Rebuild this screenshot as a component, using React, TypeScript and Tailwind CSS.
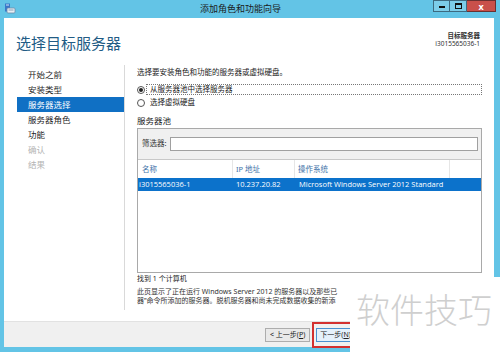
import React from "react";

const cjk = "font-['Noto_Sans','Noto_Sans_CJK_SC',sans-serif]";

const navItems = [
  { label: "开始之前", state: "normal" },
  { label: "安装类型", state: "normal" },
  { label: "服务器选择", state: "active" },
  { label: "服务器角色", state: "normal" },
  { label: "功能", state: "normal" },
  { label: "确认", state: "disabled" },
  { label: "结果", state: "disabled" },
];

function ServerIcon() {
  return (
    <svg width="12" height="11" viewBox="0 0 12 11">
      <rect x="1" y="0.5" width="5" height="8" fill="#3a78c8" />
      <rect x="2" y="1.5" width="3" height="1" fill="#cfe4f7" />
      <rect x="3" y="5" width="8" height="5" rx="1" fill="#e8eef4" stroke="#6b8aa8" strokeWidth="0.8" />
      <rect x="4.5" y="6.5" width="5" height="1" fill="#8aa0b6" />
    </svg>
  );
}

export default function App() {
  return (
    <div className={`w-[500px] h-[352px] bg-[#63c4e6] flex flex-col overflow-hidden relative ${cjk}`}>
      {/* ── TITLE BAR ── */}
      <div className="h-[18px] flex items-start shrink-0">
        <div className="w-[16px] h-[16px] ml-[4px] mt-[3px]">
          <ServerIcon />
        </div>
        <div className="flex-1 text-center text-[9px] leading-[18px] text-[#1b1b1b] pl-[28px]">添加角色和功能向导</div>
        <div className="flex h-[12px] mr-[4px]">
          <div className="w-[17px] h-[12px] border border-[#3d6a80] bg-[#7ccde9] flex items-end justify-center pb-[3px]">
            <div className="w-[6px] h-[2px] bg-[#111]" />
          </div>
          <div className="w-[17px] h-[12px] border border-l-0 border-[#3d6a80] bg-[#7ccde9] flex items-center justify-center">
            <div className="w-[7px] h-[6px] border-[1.5px] border-t-2 border-[#111]" />
          </div>
          <div className="w-[29px] h-[12px] border border-l-0 border-[#6a3030] bg-[#c9504a] flex items-center justify-center text-[9px] font-bold leading-none text-white">
            x
          </div>
        </div>
      </div>

      {/* ── WINDOW BODY ── */}
      <div className="flex-1 ml-[4px] mr-[6px] mb-[5px] bg-white flex flex-col">
        {/* Header */}
        <div className="h-[42px] flex items-start justify-between shrink-0">
          <div className="text-[15px] leading-none text-[#225c85] ml-[12px] mt-[18px]">选择目标服务器</div>
          <div className="text-right text-[6.5px] leading-[8px] text-[#333] mr-[14px] mt-[14px]">
            <div className="font-bold">目标服务器</div>
            <div>i3015565036-1</div>
          </div>
        </div>

        {/* Main */}
        <div className="flex-1 flex">
          {/* Left nav */}
          <div className="w-[121px] pl-[13px] pt-[7px] pb-[11px] flex">
            <div className="flex-1 flex flex-col">
              {navItems.map((item) => (
                <div
                  key={item.label}
                  className={`h-[15px] leading-[15px] text-[8.5px] pl-[11px] ${
                    item.state === "active"
                      ? "bg-[#1070c4] text-white"
                      : item.state === "disabled"
                        ? "text-[#b4b4b4]"
                        : "text-[#1e1e1e]"
                  }`}
                >
                  {item.label}
                </div>
              ))}
            </div>
            <div className="w-px bg-[#d9d9d9] mt-[-2px]" />
          </div>

          {/* Right content */}
          <div className="flex-1 pl-[12px] pr-[12px] pt-[7px] flex flex-col text-[7.5px] text-[#222]">
            <div className="leading-[10px]">选择要安装角色和功能的服务器或虚拟硬盘。</div>

            <div className="mt-[7px] flex items-center h-[11px]">
              <div className="w-[8px] h-[8px] rounded-full border border-[#555] bg-white flex items-center justify-center">
                <div className="w-[4px] h-[4px] rounded-full bg-[#222]" />
              </div>
              <div className="ml-[1px] flex-1 h-[11px] border border-dotted border-[#777] leading-[9px] pl-[3px]">从服务器池中选择服务器</div>
            </div>
            <div className="mt-[2px] flex items-center h-[11px]">
              <div className="w-[8px] h-[8px] rounded-full border border-[#555] bg-white" />
              <div className="ml-[5px] leading-[9px]">选择虚拟硬盘</div>
            </div>

            <div className="mt-[8px] text-[8.5px] leading-[10px] text-[#222]">服务器池</div>

            {/* Pool panel */}
            <div className="mt-[2px] h-[145px] border border-[#a9a9a9] flex flex-col">
              <div className="h-[31px] bg-[#f0f0f0] flex items-center pl-[4px] pr-[3px] border-b border-[#c8c8c8]">
                <span className="text-[7.5px] text-[#333]">筛选器:</span>
                <div className="flex-1 ml-[3px] h-[14px] bg-white border border-[#a0a0a0]" />
              </div>
              <div className="h-[18px] flex text-[7.5px] text-[#3e72a8] leading-[18px]">
                <div className="w-[95px] pl-[4px] border-r border-[#e6e6e6]">名称</div>
                <div className="w-[62px] pl-[3px] border-r border-[#e6e6e6]">IP 地址</div>
                <div className="w-[155px] pl-[3px] border-r border-[#e6e6e6]">操作系统</div>
                <div className="flex-1" />
              </div>
              <div className="h-[13px] bg-[#0c72cb] text-white flex items-center text-[7.5px] font-['Open_Sans',sans-serif]">
                <div className="w-[95px] pl-[1px]">i3015565036-1</div>
                <div className="w-[62px] pl-[3px]">10.237.20.82</div>
                <div className="pl-[4px] whitespace-nowrap">Microsoft Windows Server 2012 Standard</div>
              </div>
              <div className="flex-1 bg-white" />
            </div>

            <div className="mt-[1px] leading-[10px] text-[7px]">找到 1 个计算机</div>
            <div className="mt-[3px] w-[212px] overflow-hidden leading-[9px] text-[7px] text-[#333] whitespace-nowrap">
              <div className="overflow-hidden">此页显示了正在运行 Windows Server 2012 的服务器以及那些已</div>
              <div className="overflow-hidden">器”命令所添加的服务器。脱机服务器和尚未完成数据收集的新添</div>
            </div>
          </div>
        </div>

        {/* Footer */}
        <div className="h-[26px] bg-[#f0f0f0] border-t border-[#e2e2e2] flex items-center pl-[261px] shrink-0">
          <div className="h-[14px] px-[4px] border border-[#adadad] bg-[#e9e9e9] text-[7px] leading-[12px] text-[#222]">&lt; 上一步(<span className="underline">P</span>)</div>
          <div className="ml-[2px] h-[26px] w-[42px] border-2 border-[#d3302f] flex items-center pl-[2px]">
            <div className="h-[14px] px-[3px] border border-[#4a90d0] bg-[#e5f1fb] text-[7px] leading-[12px] text-[#222] whitespace-nowrap overflow-hidden">下一步(<span className="underline">N</span>)</div>
          </div>
        </div>
      </div>

      {/* ── WATERMARK ── */}
      <div className="absolute left-[350px] top-[277px] w-[150px] h-[75px] bg-white">
        <div className="ml-[6px] mt-[12px] text-[34px] font-light leading-[40px] text-[#cfcfcf] font-['Noto_Sans_CJK_SC',sans-serif]">软件技巧</div>
      </div>
    </div>
  );
}
